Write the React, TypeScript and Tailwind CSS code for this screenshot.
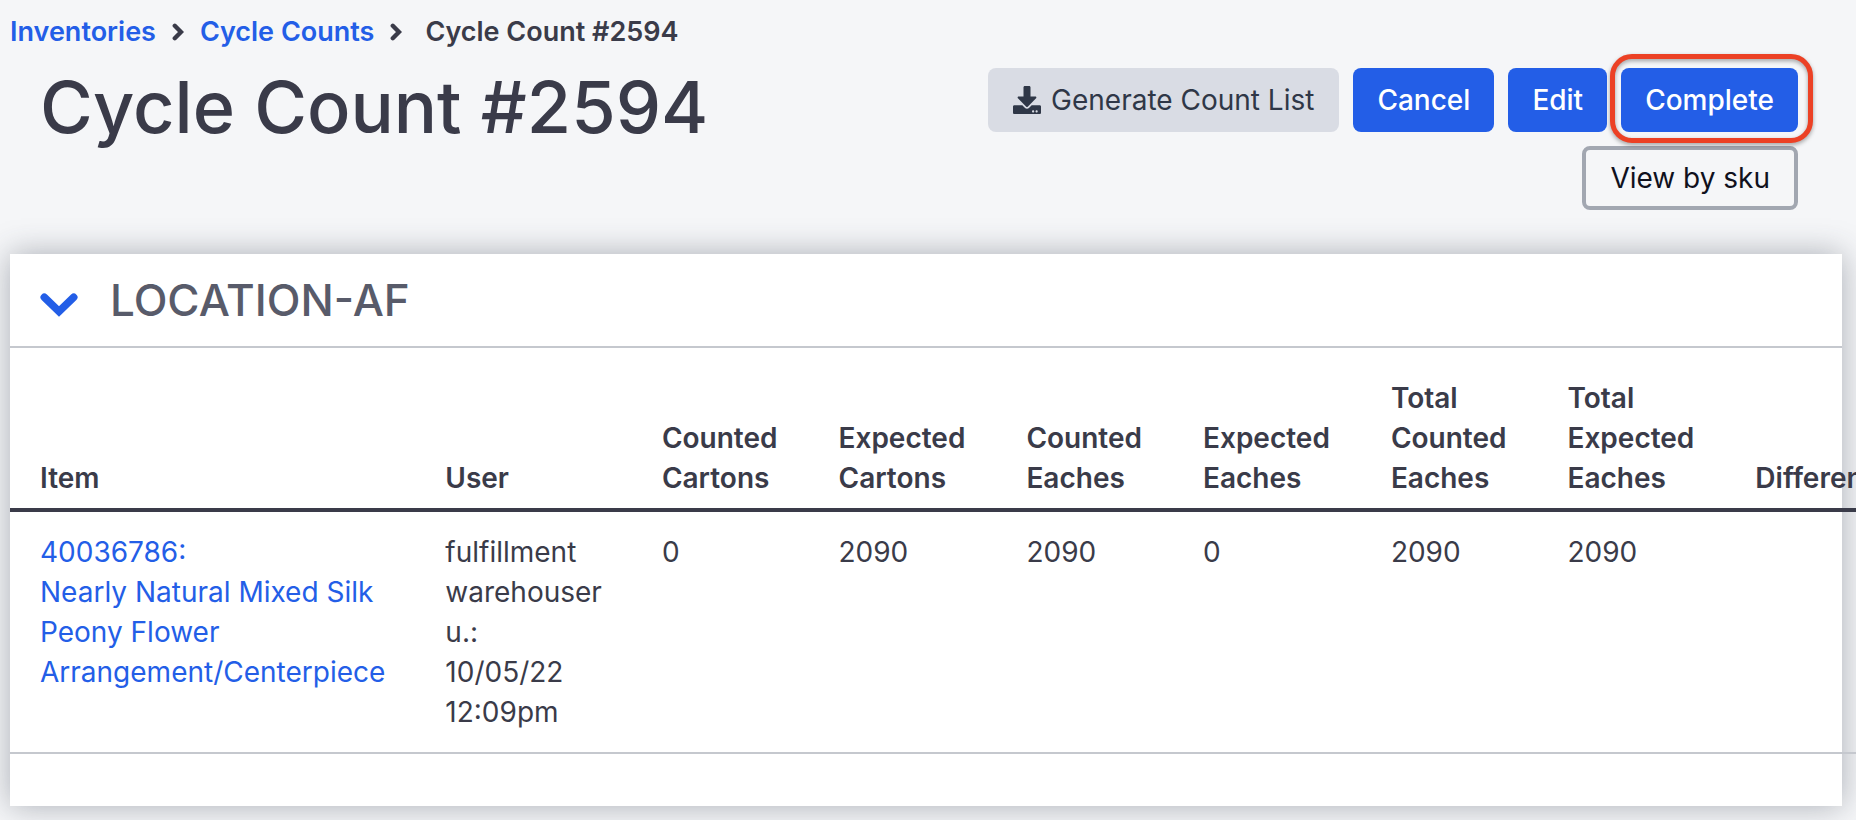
import { FaDownload } from 'react-icons/fa';

const columns = ['Item', 'User', 'Counted Cartons', 'Expected Cartons', 'Counted Eaches', 'Expected Eaches', 'Total Counted Eaches', 'Total Expected Eaches', 'Difference'];

const rows = [
  {
    sku: '40036786',
    name: 'Nearly Natural Mixed Silk Peony Flower Arrangement/Centerpiece',
    user: 'fulfillment warehouser u.:',
    date: '10/05/22',
    time: '12:09pm',
    counts: [0, 2090, 2090, 0, 2090, 2090],
  },
];

function ChevronRight() {
  return (
    <svg viewBox="0 0 12 18" className="h-[18px] w-3" fill="none" stroke="currentColor" strokeWidth="4.4" strokeLinecap="round" aria-hidden="true">
      <path d="M2.8 2.8 9 9l-6.2 6.2" />
    </svg>
  );
}

function ChevronDown() {
  return (
    <svg viewBox="0 0 38 24" className="h-6 w-[38px]" fill="none" stroke="currentColor" strokeWidth="7.6" strokeLinecap="round" aria-hidden="true">
      <path d="M4.3 4.3 19 18.4 33.7 4.3" />
    </svg>
  );
}

function Breadcrumbs() {
  return (
    <nav aria-label="Breadcrumb" className="flex items-center gap-4 pl-[10px] pt-3 text-[27px] leading-10 font-semibold">
      <a href="#inventories" className="text-[#235ee7]">
        Inventories
      </a>
      <ChevronRight />
      <a href="#cycle-counts" className="text-[#235ee7]">
        Cycle Counts
      </a>
      <ChevronRight />
      <span className="pl-[7px]">Cycle Count #2594</span>
    </nav>
  );
}

export default function App() {
  const button = 'flex h-16 items-center rounded-lg';
  const primary = `${button} px-6 bg-[#235ee7] text-white font-medium`;

  return (
    <div className="min-h-screen overflow-x-hidden bg-[#f5f6f8] pb-[14px] font-[Inter,sans-serif] text-[28px] leading-10 text-[#3a3b49]">
      <Breadcrumbs />

      <header className="flex items-start justify-between pb-11 pl-10 pr-[58px] pt-4">
        <h1 className="text-[72px] leading-[78px] font-medium">Cycle Count #2594</h1>
        <div className="flex flex-col items-end gap-[14px]">
          <div className="flex gap-[14px]">
            <button className={`${button} gap-[10px] px-[25px] bg-[#d9dce4] text-[#2f3747]`}>
              <FaDownload className="size-7" />
              Generate Count List
            </button>
            <button className={primary}>Cancel</button>
            <button className={primary}>Edit</button>
            <div className="relative">
              <button className={primary}>Complete</button>
              <div className="pointer-events-none absolute -bottom-[11px] -left-[11px] -right-[15px] -top-[14px] rounded-[22px] border-5 border-[#ec4125] drop-shadow-[0_2px_2px_rgba(0,0,0,0.35)]" />
            </div>
          </div>
          <button className="flex h-16 items-center rounded-lg border-4 border-[#a2a7b1] px-6 text-[#10111d]">
            View by sku
          </button>
        </div>
      </header>

      <section className="ml-[10px] mr-[14px] bg-white pb-[52px] shadow-[0_0_30px_rgba(47,55,71,0.38)]">
        <div className="flex h-[94px] items-center gap-8 border-b-2 border-[#c5c8ce] px-[30px]">
          <button aria-label="Toggle location" className="pt-[10px] text-[#235ee7]">
            <ChevronDown />
          </button>
          <h2 className="text-[44px] font-medium text-[#585b6a]">LOCATION-AF</h2>
        </div>

        <table className="w-full text-left">
          <thead>
            <tr className="border-b-4 border-[#3a3b49]">
              {columns.map((column, i) => (
                <th
                  key={column}
                  className={`pb-[10px] pl-[30px] pt-[30px] align-bottom font-semibold ${i < 2 ? 'pr-[30px]' : 'pr-[31px]'}`}
                >
                  {column}
                </th>
              ))}
            </tr>
          </thead>
          <tbody>
            {rows.map((row) => (
              <tr key={row.sku} className="border-b-2 border-[#c5c8ce] align-top">
                <td className="px-[30px] py-5">
                  <a href={`#item-${row.sku}`} className="text-[#235ee7]">
                    {row.sku}:<br />
                    {row.name}
                  </a>
                </td>
                <td className="px-[30px] py-5">
                  {row.user}
                  <br />
                  {row.date}
                  <br />
                  {row.time}
                </td>
                {row.counts.map((count, i) => (
                  <td key={i} className="px-[30px] py-5">
                    {count}
                  </td>
                ))}
                <td className="px-[30px] py-5" />
              </tr>
            ))}
          </tbody>
        </table>
      </section>
    </div>
  );
}
